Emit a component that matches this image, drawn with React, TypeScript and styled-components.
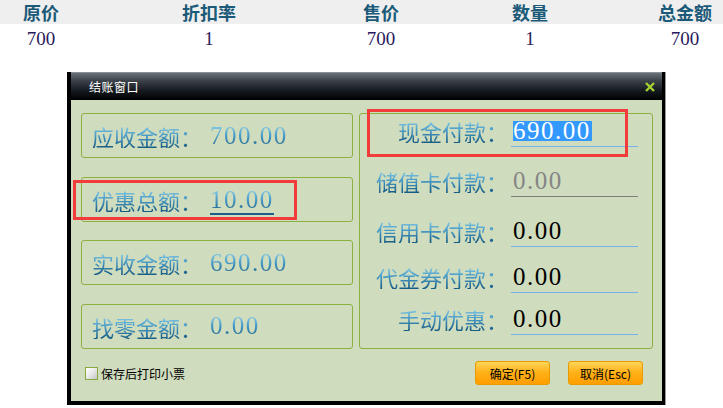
import React from "react";
import styled, { createGlobalStyle } from "styled-components";

const GlobalStyle = createGlobalStyle`
  html, body {
    margin: 0;
    padding: 0;
    overflow: hidden;
    background: #ffffff;
    font-family: "Noto Sans CJK SC", sans-serif;
  }
`;

const Page = styled.div`
  position: relative;
  width: 723px;
  height: 408px;
  overflow: hidden;
`;

const Table = styled.div`
  width: 736px;
`;

const TableRow = styled("div")<{ head?: boolean }>`
  display: grid;
  grid-template-columns: 82px 254px 90px 208px 102px;
  height: ${({ head }) => (head ? "24px" : "28px")};
  background: ${({ head }) => (head ? "#efefef" : "#ffffff")};
  align-items: center;

  & span {
    text-align: center;
    font-family: ${({ head }) =>
      head ? '"Noto Sans CJK SC", sans-serif' : '"Liberation Serif", serif'};
    font-weight: ${({ head }) => (head ? 700 : 400)};
    font-size: ${({ head }) => (head ? "18px" : "19px")};
    line-height: 20px;
    color: ${({ head }) => (head ? "#1b5a78" : "#2a1c5c")};
    margin-top: ${({ head }) => (head ? "-1px" : "1px")};
  }
`;

const Dialog = styled.div`
  position: absolute;
  left: 67px;
  top: 72px;
  width: 598px;
  height: 333px;
  box-sizing: border-box;
  border-left: 4px solid #000;
  border-right: 3px solid #000;
  border-bottom: 4px solid #000;
  display: flex;
  flex-direction: column;
  box-shadow: 1px 0 0 #9a9a9a;
`;

const TitleBar = styled.div`
  height: 28px;
  flex: none;
  display: flex;
  align-items: center;
  justify-content: space-between;
  padding: 0 6px 0 18px;
  background: linear-gradient(to bottom, #6a7078 0%, #3a4048 30%, #151a20 65%, #000 100%);
  border-top: 1px solid #8a9098;
  box-sizing: border-box;
`;

const Title = styled.span`
  color: #ffffff;
  font-size: 12px;
  letter-spacing: 0.5px;
`;

const Body = styled.div`
  flex: 1;
  background: #cfdcbd;
  padding: 13px 9px 0 10px;
  display: flex;
  flex-direction: column;
`;

const Columns = styled.div`
  display: grid;
  grid-template-columns: 272px 294px;
  column-gap: 6px;
  height: 236px;
`;

const LeftCol = styled.div`
  display: flex;
  flex-direction: column;
  justify-content: space-between;
`;

const SumBox = styled.div`
  height: 45px;
  box-sizing: border-box;
  border: 1px solid #8db043;
  border-radius: 3px;
  display: flex;
  align-items: center;
  padding: 1px 0 0 10px;
`;

const Grad = styled.span`
  background: linear-gradient(to bottom, #8fd2ee 0%, #4c9ec9 45%, #135a84 100%);
  -webkit-background-clip: text;
  background-clip: text;
  color: transparent;
`;

const Label = styled(Grad)`
  font-family: "Noto Sans CJK SC", sans-serif;
  font-size: 22px;
  line-height: 24px;
`;

const Num = styled(Grad)<{ underline?: boolean }>`
  font-family: "Liberation Serif", serif;
  font-size: 25px;
  line-height: 24px;
  letter-spacing: 1.5px;
  margin-left: 8px;
  padding-bottom: 1px;
  border-bottom: ${({ underline }) => (underline ? "2px solid #1c5f8c" : "none")};
  margin-top: ${({ underline }) => (underline ? "3px" : "0")};
`;

const PayPanel = styled.div`
  box-sizing: border-box;
  border: 1px solid #8db043;
  border-radius: 3px;
  display: flex;
  flex-direction: column;
`;

const PayRow = styled("div")<{ top: number }>`
  display: grid;
  grid-template-columns: 148px 127px;
  column-gap: 3px;
  height: 32px;
  margin-top: ${({ top }) => top}px;
  align-items: center;
`;

const PayLabel = styled(Label)`
  text-align: right;
`;

const PayInput = styled("div")<{ disabled?: boolean }>`
  height: 32px;
  box-sizing: border-box;
  border-bottom: 1px solid ${({ disabled }) => (disabled ? "#7d7d7d" : "#77b0ea")};
  padding-left: 2px;
  display: flex;
  align-items: center;
  font-family: "Liberation Serif", serif;
  font-size: 25px;
  letter-spacing: 1.5px;
  color: ${({ disabled }) => (disabled ? "#858585" : "#000000")};
`;

const Selected = styled.span`
  background: #3399ff;
  color: #ffffff;
  line-height: 20px;
  padding-right: 1px;
`;

const Footer = styled.div`
  margin-top: 12px;
  height: 24px;
  display: flex;
  align-items: center;
  justify-content: space-between;
  padding: 0 10px 0 4px;
`;

const Check = styled.label`
  display: flex;
  align-items: center;
  gap: 3px;
  font-size: 12px;
  color: #000;
`;

const CheckBox = styled.span`
  width: 13px;
  height: 13px;
  box-sizing: border-box;
  border: 1px solid #86a83c;
  background: linear-gradient(135deg, #ffffff 0%, #e8e8e8 50%, #c4c4c4 100%);
`;

const Buttons = styled.div`
  display: flex;
  gap: 18px;
`;

const Btn = styled.button`
  width: 75px;
  height: 24px;
  box-sizing: border-box;
  border: 1px solid #e89a00;
  border-radius: 3px;
  background: linear-gradient(to bottom, #ffd65a 0%, #ffb21a 45%, #ff9e00 100%);
  font-family: "Noto Sans CJK SC", sans-serif;
  font-size: 12px;
  color: #000;
  padding: 0;
  cursor: pointer;
`;

const Mark = styled("div")<{ x: number; y: number; w: number; h: number }>`
  position: absolute;
  left: ${({ x }) => x}px;
  top: ${({ y }) => y}px;
  width: ${({ w }) => w}px;
  height: ${({ h }) => h}px;
  box-sizing: border-box;
  border: 3px solid #f23b3b;
  pointer-events: none;
`;

const head = ["原价", "折扣率", "售价", "数量", "总金额"];
const row = ["700", "1", "700", "1", "700"];

const sums = [
  { label: "应收金额：", value: "700.00" },
  { label: "优惠总额：", value: "10.00", underline: true },
  { label: "实收金额：", value: "690.00" },
  { label: "找零金额：", value: "0.00" },
];

const pays = [
  { label: "现金付款：", value: "690.00", top: 1, selected: true },
  { label: "储值卡付款：", value: "0.00", top: 18, disabled: true },
  { label: "信用卡付款：", value: "0.00", top: 18 },
  { label: "代金券付款：", value: "0.00", top: 14 },
  { label: "手动优惠：", value: "0.00", top: 10 },
];

function CloseIcon() {
  return (
    <svg width="12" height="12" viewBox="0 0 12 12">
      <path d="M2 2 L10 10 M10 2 L2 10" stroke="#a6d230" strokeWidth="2.4" />
    </svg>
  );
}

export default function App() {
  return (
    <Page>
      <GlobalStyle />
      <Table>
        <TableRow head>
          {head.map((h) => (
            <span key={h}>{h}</span>
          ))}
        </TableRow>
        <TableRow>
          {row.map((r, i) => (
            <span key={i}>{r}</span>
          ))}
        </TableRow>
      </Table>

      <Dialog>
        <TitleBar>
          <Title>结账窗口</Title>
          <CloseIcon />
        </TitleBar>
        <Body>
          <Columns>
            <LeftCol>
              {sums.map((s) => (
                <SumBox key={s.label}>
                  <Label>{s.label}</Label>
                  <Num underline={s.underline}>{s.value}</Num>
                </SumBox>
              ))}
            </LeftCol>
            <PayPanel>
              {pays.map((p) => (
                <PayRow key={p.label} top={p.top}>
                  <PayLabel>{p.label}</PayLabel>
                  <PayInput disabled={p.disabled}>
                    {p.selected ? <Selected>{p.value}</Selected> : p.value}
                  </PayInput>
                </PayRow>
              ))}
            </PayPanel>
          </Columns>
          <Footer>
            <Check>
              <CheckBox />
              保存后打印小票
            </Check>
            <Buttons>
              <Btn>确定(F5)</Btn>
              <Btn>取消(Esc)</Btn>
            </Buttons>
          </Footer>
        </Body>
      </Dialog>

      <Mark x={73} y={180} w={224} h={40} />
      <Mark x={367} y={109} w={261} h={48} />
    </Page>
  );
}
